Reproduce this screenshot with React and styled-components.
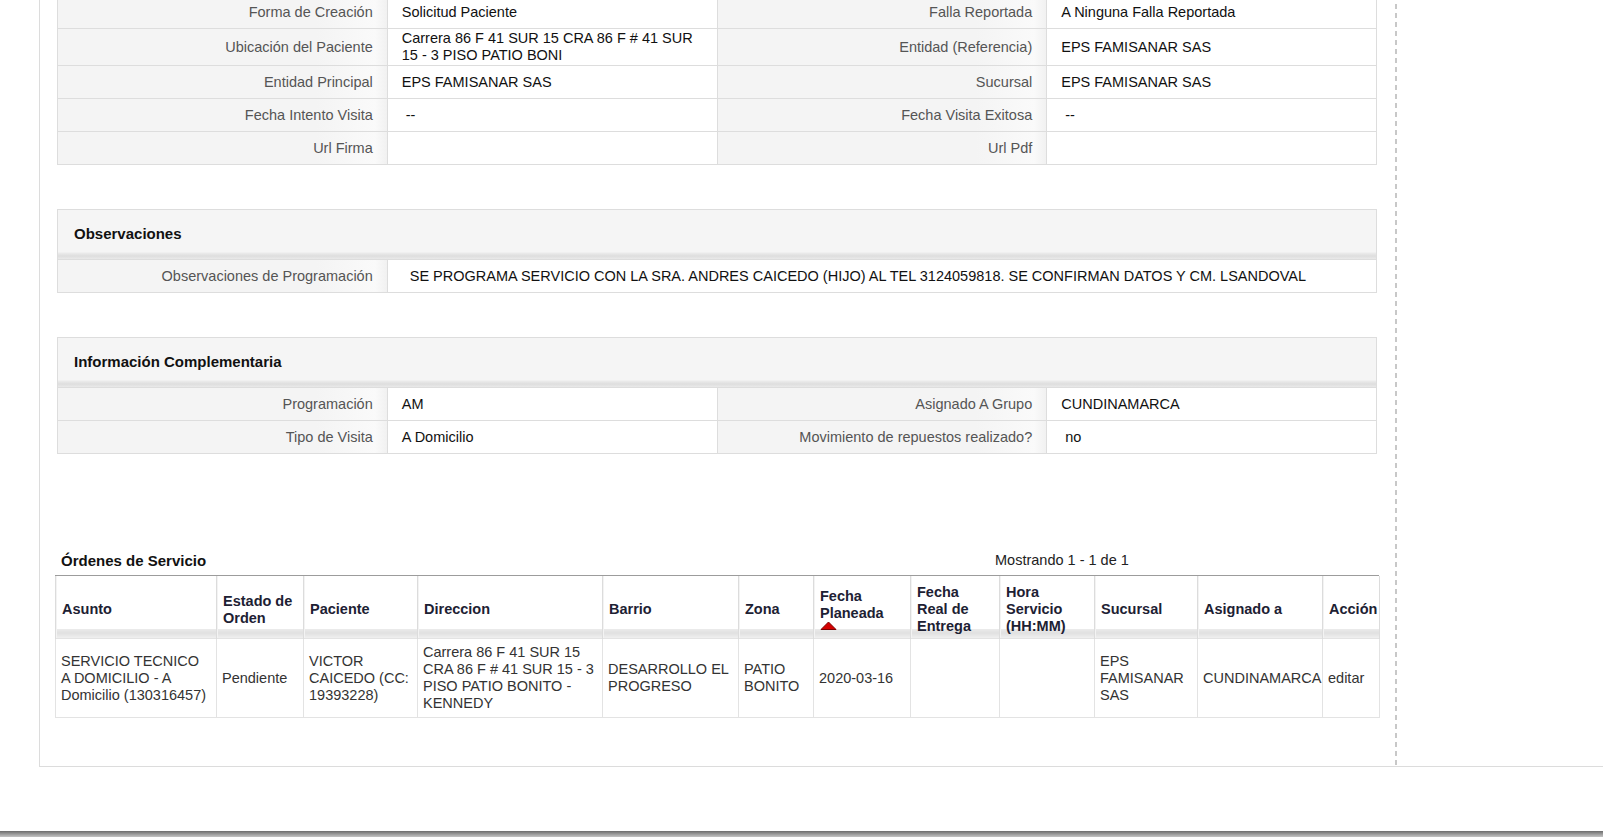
import React from "react";
import styled, { createGlobalStyle } from "styled-components";

const GlobalStyle = createGlobalStyle`
  html, body {
    margin: 0;
    padding: 0;
    background: #ffffff;
    overflow: hidden;
  }
  body {
    font-family: "Liberation Sans", Arial, Helvetica, sans-serif;
    color: #111;
  }
  * { box-sizing: border-box; }
`;

const Page = styled.div`
  margin-top: -5px;
`;

const Panel = styled.div`
  margin-left: 39px;
  border-left: 1px solid #dcdcdc;
  border-bottom: 1px solid #dcdcdc;
`;

const Main = styled.div`
  width: 1357px;
  padding: 0 20px 48px 17px;
  background-image: repeating-linear-gradient(
    to bottom,
    #c8c8c8 0,
    #c8c8c8 5px,
    transparent 5px,
    transparent 9px
  );
  background-size: 2px 100%;
  background-position: right top;
  background-repeat: no-repeat;
`;

const InfoGrid = styled.div`
  display: grid;
  grid-template-columns: repeat(4, 1fr);
  grid-auto-rows: minmax(32px, auto);
  gap: 1px;
  background: #dddddd;
  border: 1px solid #dddddd;
  margin-top: ${(p) => p.$mt || 0}px;
`;

const SectionHeader = styled.div`
  grid-column: 1 / -1;
  height: 49px;
  display: flex;
  align-items: center;
  padding: 0 16px 3px;
  font-size: 15px;
  font-weight: bold;
  color: #111;
  background: linear-gradient(
    to bottom,
    #f5f5f5 0,
    #f5f5f5 calc(100% - 7px),
    #ebebeb calc(100% - 6px),
    #dedede calc(100% - 3px),
    #e9e9e9 100%
  );
`;

const Label = styled.div`
  display: flex;
  align-items: center;
  justify-content: flex-end;
  text-align: right;
  padding: 1px 14px;
  font-size: 14.5px;
  line-height: 17px;
  color: #555;
  background: linear-gradient(
    90deg,
    #f4f4f4 0,
    #f4f4f4 calc(100% - 70px),
    #fafafa calc(100% - 12px),
    #f1f1f1 100%
  );
`;

const Value = styled.div`
  display: flex;
  align-items: center;
  padding: 1px 14px 1px ${(p) => 14 + (p.$indent || 0)}px;
  font-size: 14.5px;
  line-height: 17px;
  color: #111;
  background: #ffffff;
  grid-column: span ${(p) => p.$span || 1};
`;

const OrdersBlock = styled.div`
  margin: 94px -2px 0;
`;

const OrdersTitleBar = styled.div`
  display: grid;
  grid-template-columns: 1fr 378px;
  align-items: center;
  height: 28px;
  padding: 0 6px 3px;
  border-bottom: 1px solid #9c9c9c;
`;

const OrdersTitle = styled.div`
  font-size: 15px;
  font-weight: bold;
  color: #111;
`;

const Pager = styled.div`
  font-size: 14.5px;
  color: #222;
`;

const OrdersTable = styled.table`
  width: 100%;
  border-collapse: collapse;
  table-layout: fixed;
`;

const Th = styled.th`
  text-align: left;
  vertical-align: middle;
  font-size: 14.5px;
  font-weight: bold;
  line-height: 17px;
  color: #1d2133;
  padding: 8px 5px 3px 6px;
  border-left: 1px solid #dcdcdc;
  border-right: 1px solid #dcdcdc;
  box-shadow: inset 1px 0 0 #f3f3f3;
  height: 62px;
  background: linear-gradient(
    to bottom,
    #ffffff 0,
    #ffffff calc(100% - 9px),
    #ebebeb calc(100% - 9px),
    #e0e0e0 calc(100% - 5px),
    #efefef 100%
  );
`;

const Td = styled.td`
  vertical-align: middle;
  font-size: 14.5px;
  line-height: 17px;
  color: #333;
  padding: 5px 4px 5px 5px;
  border: 1px solid #e3e3e3;
  background: #fff;
`;

const SortIcon = styled.span`
  display: block;
  height: 10px;
  line-height: 0;
  margin-top: -1px;
`;

const detailRows = [
  ["Forma de Creación", "Solicitud Paciente", 0, "Falla Reportada", "A Ninguna Falla Reportada", 0],
  [
    "Ubicación del Paciente",
    "Carrera 86 F 41 SUR 15 CRA 86 F # 41 SUR 15 - 3 PISO PATIO BONI",
    0,
    "Entidad (Referencia)",
    "EPS FAMISANAR SAS",
    0,
  ],
  ["Entidad Principal", "EPS FAMISANAR SAS", 0, "Sucursal", "EPS FAMISANAR SAS", 0],
  ["Fecha Intento Visita", "--", 4, "Fecha Visita Exitosa", "--", 4],
  ["Url Firma", "", 0, "Url Pdf", "", 0],
];

const colWidths = [161, 87, 114, 185, 136, 75, 97, 89, 95, 103, 125, 57];

const SortArrow = () => (
  <svg width="17" height="9" viewBox="0 0 17 9">
    <path d="M8.5 1 L16 8.5 L1 8.5 Z" fill="#d40000" stroke="#7c0000" strokeWidth="1" />
  </svg>
);

export default function App() {
  return (
    <>
      <GlobalStyle />
      <Page>
        <Panel>
          <Main>
            <InfoGrid>
              {detailRows.map(([l1, v1, i1, l2, v2, i2]) => (
                <React.Fragment key={l1}>
                  <Label>{l1}</Label>
                  <Value $indent={i1}>{v1}</Value>
                  <Label>{l2}</Label>
                  <Value $indent={i2}>{v2}</Value>
                </React.Fragment>
              ))}
            </InfoGrid>

            <InfoGrid $mt={44}>
              <SectionHeader>Observaciones</SectionHeader>
              <Label>Observaciones de Programación</Label>
              <Value $span={3} $indent={8}>
                SE PROGRAMA SERVICIO CON LA SRA. ANDRES CAICEDO (HIJO) AL TEL 3124059818. SE CONFIRMAN DATOS Y CM. LSANDOVAL
              </Value>
            </InfoGrid>

            <InfoGrid $mt={44}>
              <SectionHeader>Información Complementaria</SectionHeader>
              <Label>Programación</Label>
              <Value>AM</Value>
              <Label>Asignado A Grupo</Label>
              <Value>CUNDINAMARCA</Value>
              <Label>Tipo de Visita</Label>
              <Value>A Domicilio</Value>
              <Label>Movimiento de repuestos realizado?</Label>
              <Value $indent={4}>no</Value>
            </InfoGrid>

            <OrdersBlock>
              <OrdersTitleBar>
                <OrdersTitle>Órdenes de Servicio</OrdersTitle>
                <Pager>Mostrando 1 - 1 de 1</Pager>
              </OrdersTitleBar>
              <OrdersTable>
                <colgroup>
                  {colWidths.map((w, i) => (
                    <col key={i} style={{ width: w }} />
                  ))}
                </colgroup>
                <thead>
                  <tr>
                    <Th>Asunto</Th>
                    <Th>Estado de<br />Orden</Th>
                    <Th>Paciente</Th>
                    <Th>Direccion</Th>
                    <Th>Barrio</Th>
                    <Th>Zona</Th>
                    <Th>
                      Fecha<br />Planeada
                      <SortIcon>
                        <SortArrow />
                      </SortIcon>
                    </Th>
                    <Th>Fecha<br />Real de<br />Entrega</Th>
                    <Th>Hora<br />Servicio<br />(HH:MM)</Th>
                    <Th>Sucursal</Th>
                    <Th>Asignado a</Th>
                    <Th>Acción</Th>
                  </tr>
                </thead>
                <tbody>
                  <tr>
                    <Td>SERVICIO TECNICO<br />A DOMICILIO - A<br />Domicilio (130316457)</Td>
                    <Td>Pendiente</Td>
                    <Td>VICTOR<br />CAICEDO (CC:<br />19393228)</Td>
                    <Td>Carrera 86 F 41 SUR 15<br />CRA 86 F # 41 SUR 15 - 3<br />PISO PATIO BONITO -<br />KENNEDY</Td>
                    <Td>DESARROLLO EL<br />PROGRESO</Td>
                    <Td>PATIO<br />BONITO</Td>
                    <Td>2020-03-16</Td>
                    <Td></Td>
                    <Td></Td>
                    <Td>EPS<br />FAMISANAR<br />SAS</Td>
                    <Td>CUNDINAMARCA</Td>
                    <Td>editar</Td>
                  </tr>
                </tbody>
              </OrdersTable>
            </OrdersBlock>
          </Main>
        </Panel>
        <FooterBar />
      </Page>
    </>
  );
}

const FooterBar = styled.div`
  margin-top: 64px;
  height: 20px;
  background: linear-gradient(
    to bottom,
    #6c6c6c 0,
    #9a9a9a 3px,
    #c4c4c4 6px,
    #dedede 9px,
    #eeeeee 20px
  );
`;
